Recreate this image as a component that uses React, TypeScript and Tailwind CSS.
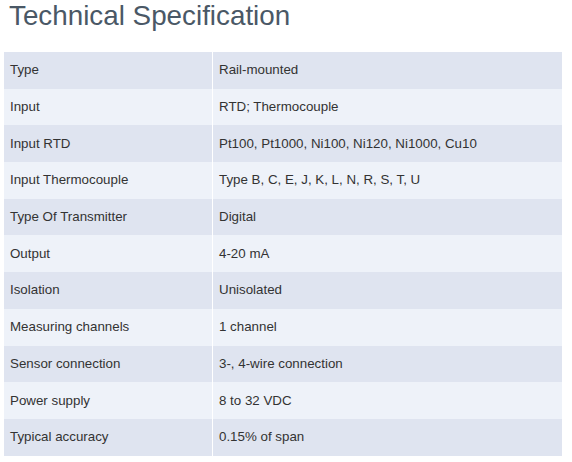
const SPECS: [string, string][] = [
  ['Type', 'Rail-mounted'],
  ['Input', 'RTD; Thermocouple'],
  ['Input RTD', 'Pt100, Pt1000, Ni100, Ni120, Ni1000, Cu10'],
  ['Input Thermocouple', 'Type B, C, E, J, K, L, N, R, S, T, U'],
  ['Type Of Transmitter', 'Digital'],
  ['Output', '4-20 mA'],
  ['Isolation', 'Unisolated'],
  ['Measuring channels', '1 channel'],
  ['Sensor connection', '3-, 4-wire connection'],
  ['Power supply', '8 to 32 VDC'],
  ['Typical accuracy', '0.15% of span'],
]

export default function App() {
  return (
    <div className="w-[572px] h-[462px] bg-white overflow-hidden font-['Liberation_Sans',Arial,sans-serif]">
      <h2 className="pl-[9px] pt-[0px] text-[27.8px] leading-[31px] text-[#4a5866]">Technical Specification</h2>

      {/* spec table */}
      <div className="mt-[21px] ml-[4px] w-[558px] flex flex-col">
        {SPECS.map(([label, value], i) => (
          <div
            key={label}
            className={`flex h-[36.7px] items-center text-[13.33px] text-[#333] ${i % 2 === 0 ? 'bg-[#dfe4f0]' : 'bg-[#eef2f9]'}`}
          >
            <div className="w-[209px] h-full flex items-center pl-[6px] border-r border-white">{label}</div>
            <div className="flex-1 pl-[6px]">{value}</div>
          </div>
        ))}
      </div>
    </div>
  )
}
